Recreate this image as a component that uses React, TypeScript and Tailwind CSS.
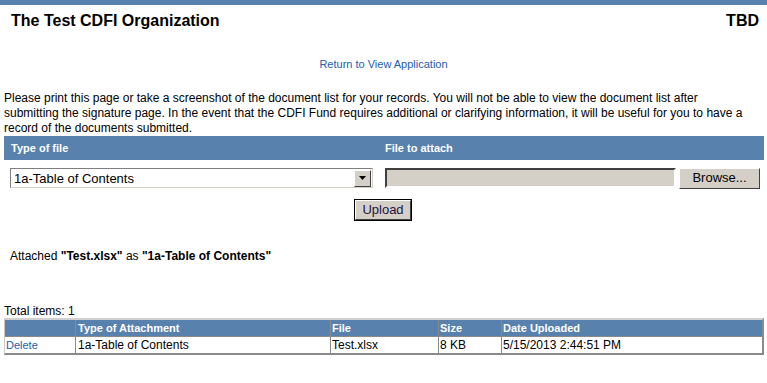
import React from "react";

export default function App() {
  const font = { fontFamily: '"Liberation Sans", Arial, sans-serif' };
  return (
    <div className="w-[767px] h-[383px] bg-white text-black overflow-hidden" style={font}>
      <div className="h-[5px] bg-[#5881ae]" />
      <div className="flex justify-between items-center h-[30px] pl-[11px] pr-[8px] pt-[1px]">
        <span className="text-[16px] font-bold leading-none">The Test CDFI Organization</span>
        <span className="text-[16px] font-bold leading-none">TBD</span>
      </div>
      <div className="flex justify-center mt-[22px] h-[14px]">
        <a className="text-[11px] leading-[14px] text-[#245ea8]">Return to View Application</a>
      </div>
      <p className="mt-[20px] px-[4px] text-[12px] leading-[15px] whitespace-nowrap">
        Please print this page or take a screenshot of the document list for your records. You will not be able to view the document list after
        <br />
        submitting the signature page. In the event that the CDFI Fund requires additional or clarifying information, it will be useful for you to have a
        <br />
        record of the documents submitted.
      </p>
      <div className="mx-[4px] w-[760px] h-[24px] bg-[#5881ae] grid grid-cols-[374px_1fr] items-center text-white text-[11px] font-bold">
        <span className="pl-[7px]">Type of file</span>
        <span className="pl-[7px]">File to attach</span>
      </div>
      <div className="flex items-center mt-[8px] h-[20px]">
        <div className="ml-[10px] w-[363px] h-[20px] border border-[#7f7f7f] border-r-[#d4d0c8] border-b-[#d4d0c8] bg-white flex items-center">
          <span className="flex-1 pl-[3px] text-[13px] leading-none">1a-Table of Contents</span>
          <div className="w-[17px] h-[17px] mr-[1px] bg-[#d4d0c8] border border-t-white border-l-white border-r-[#404040] border-b-[#404040] flex items-center justify-center">
            <svg width="7" height="4" viewBox="0 0 7 4"><path d="M0 0H7L3.5 4Z" fill="#000" /></svg>
          </div>
        </div>
        <div className="ml-[12px] w-[291px] h-[20px] bg-[#d4d0c8] border-2 border-t-[#404040] border-l-[#404040] border-r-white border-b-white" />
        <div className="ml-[3px] w-[81px] h-[21px] bg-[#d4d0c8] border border-t-white border-l-white border-r-[#404040] border-b-[#404040] flex items-center justify-center text-[13px]">
          Browse...
        </div>
      </div>
      <div className="flex justify-center mt-[11px] pr-[1px]">
        <div className="w-[58px] h-[22px] border border-black">
          <div className="w-full h-full bg-[#d4d0c8] border border-t-white border-l-white border-r-[#404040] border-b-[#404040] flex items-center justify-center text-[13px] text-[#1a1440]">
            Upload
          </div>
        </div>
      </div>
      <div className="mt-[28px] pl-[10px] text-[12px] leading-[15px]">
        Attached <b>"Test.xlsx"</b> as <b>"1a-Table of Contents"</b>
      </div>
      <div className="mt-[40px] pl-[4px] text-[12px] leading-[14px]">Total items: 1</div>
      <div className="ml-[4px] w-[760px] border-t-2 border-l border-r-2 border-b-2 border-t-[#d0d0d0] border-l-[#c8c8c8] border-b-[#8a8a8a] border-r-[#8a8a8a]">
        <div className="grid grid-cols-[71px_255px_108px_63px_1fr] h-[16px] bg-[#5881ae] text-white text-[11px] font-bold leading-[16px]">
          <span className="border-r border-[#8a8a8a]" />
          <span className="pl-[2px] border-r border-[#8a8a8a]">Type of Attachment</span>
          <span className="pl-[1px] border-r border-[#8a8a8a]">File</span>
          <span className="pl-[1px] border-r border-[#8a8a8a]">Size</span>
          <span className="pl-[1px]">Date Uploaded</span>
        </div>
        <div className="grid grid-cols-[71px_255px_108px_63px_1fr] h-[17px] border-t border-[#8a8a8a] text-[12px] leading-[16px]">
          <span className="pl-[1px] border-r border-[#8a8a8a] text-[11px] text-[#245ea8]">Delete</span>
          <span className="pl-[2px] border-r border-[#8a8a8a]">1a-Table of Contents</span>
          <span className="pl-[1px] border-r border-[#8a8a8a]">Test.xlsx</span>
          <span className="pl-[1px] border-r border-[#8a8a8a]">8 KB</span>
          <span className="pl-[1px]">5/15/2013 2:44:51 PM</span>
        </div>
      </div>
    </div>
  );
}
